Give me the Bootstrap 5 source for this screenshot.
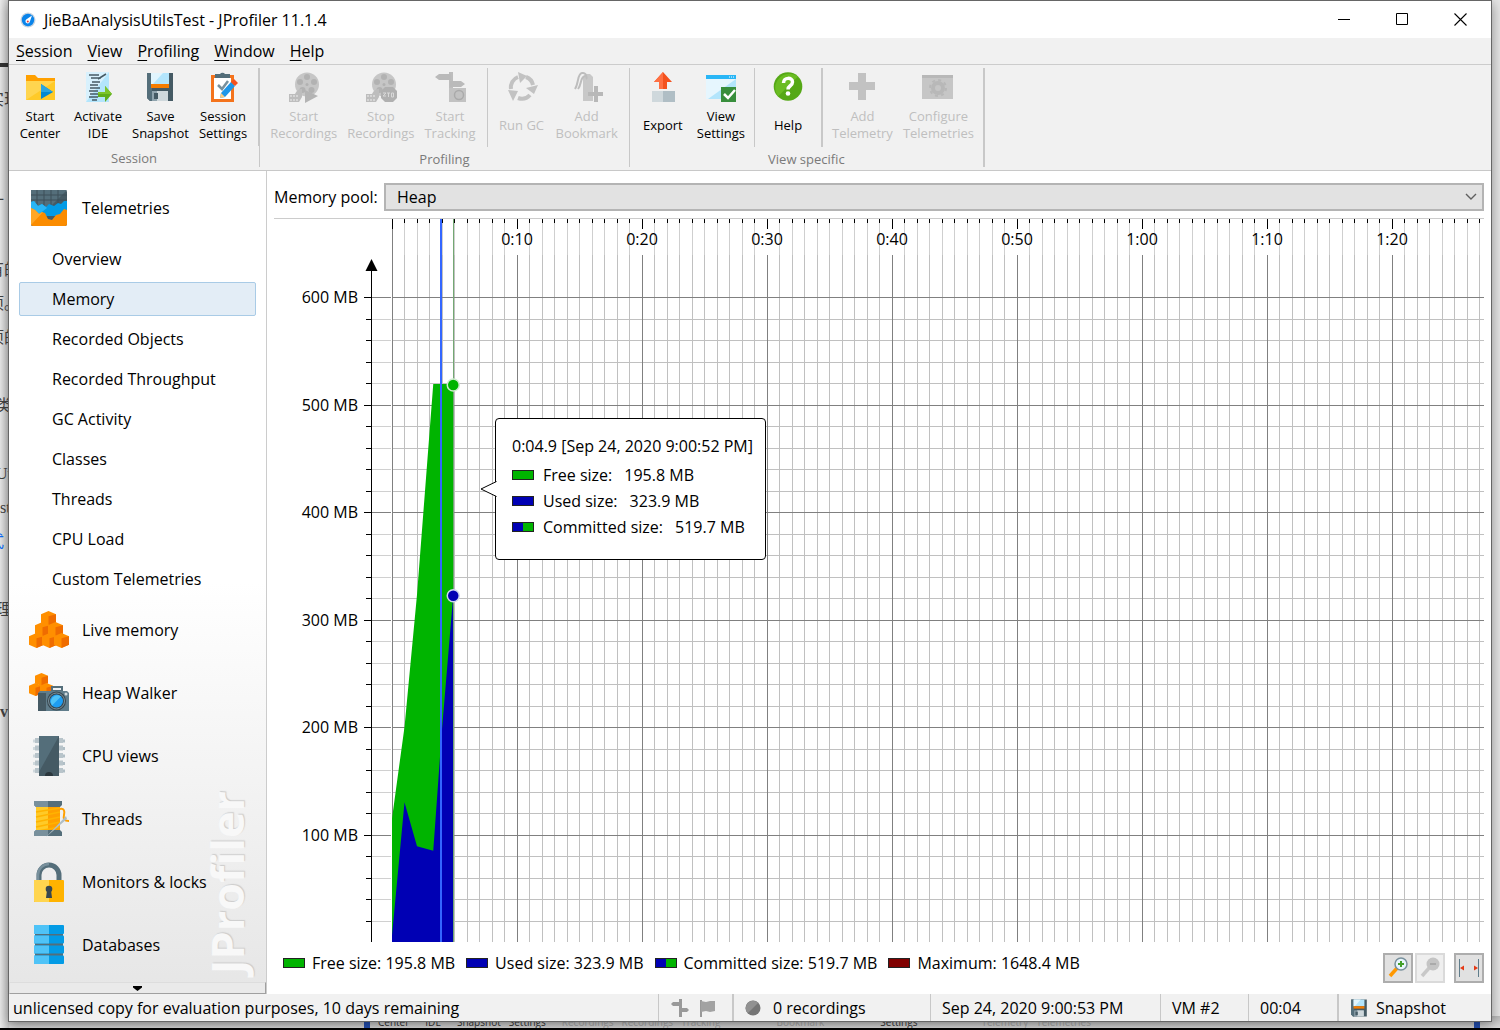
<!DOCTYPE html>
<html lang="en">
<head>
<meta charset="utf-8">
<meta name="viewport" content="width=device-width, initial-scale=1">
<title>JieBaAnalysisUtilsTest - JProfiler 11.1.4</title>
<link href="https://cdn.jsdelivr.net/npm/bootstrap@5.3.0/dist/css/bootstrap.min.css" rel="stylesheet">
<style>
body{font:16px/24px "Open Sans","Noto Sans","Noto Sans CJK SC",sans-serif;color:#000;background:#e6e6e6}
a{color:inherit;text-decoration:none}
svg{display:block;flex:none}
.desk{height:100vh;min-height:1000px;border-bottom:2px solid #000}
.doc-behind{left:0;top:0;padding-top:83px;width:40px;font:16px/34px "Liberation Serif","Noto Sans CJK SC",serif;color:#444;background:linear-gradient(90deg,#ececec,#ccc 9px)}
.doc-behind span{display:block;height:34px;margin-left:-12px;white-space:nowrap}
.doc-behind .near{margin-left:-4px}
.doc-rule{left:0;top:63px;width:9px;height:4px;background:#333}
.strip-behind{left:9px;right:0;bottom:0;height:12px;font-size:10px;line-height:12px;color:#333;background:linear-gradient(#bbb,#ddd);padding-left:355px;padding-right:20px}
.strip-behind i{width:6px;height:12px;background:#2450b4}
.strip-behind em{font-style:normal;color:#aaa}
.win{margin:0 8px 6px;border:1px solid #666;background:#fff;box-shadow:0 3px 12px rgba(0,0,0,.4);z-index:2}
.titlebar{height:37px;padding-left:11px;padding-right:2px}
.titlebar button{width:58px;height:36px}
.plain{background:none;border:0;padding:0;color:inherit}
.menus{height:27px;background:#f1f1f1;border-bottom:1px solid #ccc;padding-left:7px}
.menus a{margin-right:15px}
.menus u{text-underline-offset:3px}
.tools{height:106px;background:#f1f1f1;border-bottom:1px solid #c8c8c8;font-size:13px;line-height:17px}
.tool-group{margin:3px 0;border-right:1px solid #c8c8c8}
.tool-group:last-child{border-right-width:2px}
.tool-set{height:79px;padding:0 6px 0 5px;border-right:1px solid #c8c8c8}
.tool-group:last-child .tool-set{padding:0 4px}
.tool-set:last-child{border-right:0}
.tool-set.first-set{padding-left:2px}
.tool-set.wide-sep{border-right-width:2px}
.tool{min-width:58px;padding:3px 5px 0;height:76px}
.tool:disabled{color:#bfbfbf}
.tool-label{height:36px;margin-top:4px}
.group-name{color:#7a7a7a;margin-top:4px}
.side{width:258px;border-right:1px solid #ccc;background:linear-gradient(#fff 50%,#e6e6e6);}
.side-main{height:62px;padding-left:20px}
.side-main .pic{width:40px;margin-right:13px}
.side-sub{margin:3px 10px;height:34px;line-height:32px;padding-left:32px;border:1px solid transparent;border-radius:2px}
.side-sub.current{background:#e3edf6;border-color:#a9cbe6}
.side-top{padding-top:6px}
.side-rest{padding-bottom:6px}
.side-rest .side-main{flex:1 1 0;height:auto}
.side-more{height:12px;border:1px solid #a0a0a0;border-top-color:#ddd;border-left-color:#ddd;background:#eaeaea}
.watermark{right:12px;bottom:20px;font-weight:700;font-size:45px;line-height:54px;writing-mode:vertical-rl;transform:rotate(180deg);color:#f8f8f8;text-shadow:1px 1px 1px #ccc;z-index:0}
.side-main,.side-more{position:relative;z-index:1}
.view{padding:11px 7px 0}
.pool{height:30px}
.pool label{width:110px;flex:none;white-space:nowrap}
.pool select{height:28px;padding:0 11px;border:2px solid #b4b4b4;border-radius:0;background-color:#e2e2e2;color:#000;font-size:16px;line-height:24px;background-size:16px 14px;background-position:right 3px center;background-image:url("data:image/svg+xml,%3Csvg xmlns='http://www.w3.org/2000/svg' viewBox='0 0 16 14'%3E%3Cpath d='M3 4l5 5 5-5' fill='none' stroke='%23606060' stroke-width='1.4'/%3E%3C/svg%3E")}
.chart{margin-top:6px;border-top:1px solid #ccc;min-height:300px}
.chart svg.plot{width:100%;height:100%;position:absolute;inset:0}
.tip{left:221px;top:199px;width:271px;height:142px;padding:15px 16px;border:1px solid #000;border-radius:4px;background:#fff;white-space:nowrap}
.tip .row-line{height:26px}
.tip .row-line span+span{margin-left:12px}
.tip-arrow{left:-16px;top:62px}
.sw{display:inline-block;width:22px;height:10px;border:1px solid #222;margin-right:9px}
.sw-free{background:#00b400}
.sw-used{background:#0000b4}
.sw-both{background:linear-gradient(90deg,#0000b4 50%,#00b400 50%)}
.sw-max{background:#800000}
.legend-row{height:52px;padding-left:9px}
.legend-row .sw{margin-right:7px}
.entry{margin-right:11px;height:42px}
.zoomers{padding-top:11px}
.zoomers button{width:30px;height:30px;border:2px solid #adadad;background:#e1e1e1;padding:0}
.zoomers button:disabled{border-color:#dadada;background:#efefef;margin:0 9px 0 2px}
.status{height:27px;background:#f1f1f1;line-height:28px;padding-left:4px;white-space:nowrap}
.status>div+div{border-left:1px solid #c8c8c8;padding-left:11px}
.status>.thick{border-left-width:2px!important}
.c-marks{width:74px}.c-rec{width:198px}.c-date{width:230px}.c-vm{width:88px}.c-time{width:89px}.c-snap{width:154px}
</style>
<script src="https://cdn.jsdelivr.net/npm/bootstrap@5.3.0/dist/js/bootstrap.bundle.min.js"></script>
</head>
<body>
<svg width="0" height="0" class="position-absolute" aria-hidden="true">
  <symbol id="floppy" viewBox="0 0 30 30"><path d="M2 1h26v28H5l-3-3z" fill="#455a64"/><path d="M2 1h5v28H5l-3-3z" fill="#546e7a"/><path d="M6 1h18v11H6z" fill="#b3e5fc"/><path d="M6 1h12L8 12H6z" fill="#e1f5fe"/><path d="M6 12h18v4H6z" fill="#f57c00"/><path d="M7 19h16v10H7z" fill="#90a4ae"/><path d="M12 19h11v10H12z" fill="#cfd8dc"/><path d="M9 21h4v6H9z" fill="#455a64"/></symbol>
  <symbol id="reel" viewBox="0 0 30 30"><circle cx="18" cy="12.500" r="12" fill="#c6c6c6"/><g fill="#b2b2b2"><circle cx="18" cy="5" r="3"/><circle cx="25" cy="10" r="3"/><circle cx="22.500" cy="18" r="3"/><circle cx="13.500" cy="18" r="3"/><circle cx="11" cy="10" r="3"/><circle cx="18" cy="12.500" r="1.500"/></g><path d="M0 22h6c2-4 4-5 7-5v8l-3 5H0z" fill="#bdbdbd"/><path d="M1 24h2m1 0h2m1 0h2M1 28h2m1 0h2m1 0h2" stroke="#eee"/></symbol>
  <symbol id="cell" viewBox="0 0 14 14"><path d="M7 0l7 3v8l-7 3-7-3V3z" fill="#ff8f00"/><path d="M7 5l7-2v8l-7 3z" fill="#ef6c00"/></symbol>
</svg>

<div class="desk position-relative d-flex overflow-hidden">
  <div class="doc-behind position-absolute h-100" aria-hidden="true">
    <span>实现</span><span></span><span></span><span>计</span><span></span><span>有的</span><span>项。</span><span>项的</span><span></span><span class="near">类</span><span></span><span class="near">Uti</span><span class="near">&nbsp;st</span><span class="text-primary">式</span><span></span><span class="near">理</span><span></span><span></span><span><b>&nbsp;&nbsp;&nbsp;v</b></span>
  </div>
  <div class="doc-rule position-absolute"></div>
  <div class="strip-behind position-absolute d-flex" aria-hidden="true">
    <i></i><span class="ms-2">Center</span><span class="ms-3">IDE</span><span class="ms-3">Snapshot</span><span class="ms-2">Settings</span><em class="ms-3">Recordings</em><em class="ms-2">Recordings</em><em class="ms-2">Tracking</em><em class="ms-5 ps-2">Bookmark</em><span class="ms-5 ps-2">Settings</span><em class="ms-5 ps-3">Telemetry</em><em class="ms-2">Telemetries</em><i class="ms-auto"></i>
  </div>

  <div class="win position-relative flex-fill d-flex flex-column">
    <header class="titlebar d-flex align-items-center">
      <svg width="16" height="16" viewBox="0 0 16 16" class="me-2"><circle cx="8" cy="8" r="7.500" fill="#c8d4e0"/><circle cx="8" cy="8" r="6.200" fill="#0a84ea"/><path d="M12 3.500L9.800 9.800a2.200 2.200 0 1 1-3.600-2.200z" fill="#fff"/><circle cx="7.800" cy="9.500" r="1" fill="#e53935"/></svg>
      <span>JieBaAnalysisUtilsTest - JProfiler 11.1.4</span>
      <div class="ms-auto d-flex">
        <button class="plain d-flex align-items-center justify-content-center" aria-label="Minimize"><svg width="13" height="13"><path d="M0 6.500h12" stroke="#000"/></svg></button>
        <button class="plain d-flex align-items-center justify-content-center" aria-label="Maximize"><svg width="13" height="13"><path d="M.5.5h11v11H.5z" fill="none" stroke="#000"/></svg></button>
        <button class="plain d-flex align-items-center justify-content-center" aria-label="Close"><svg width="13" height="13"><path d="M.5.5l12 12m0-12l-12 12" stroke="#000" stroke-width="1.100"/></svg></button>
      </div>
    </header>

    <nav class="menus d-flex align-items-center">
      <a href="#"><u>S</u>ession</a><a href="#"><u>V</u>iew</a><a href="#"><u>P</u>rofiling</a><a href="#"><u>W</u>indow</a><a href="#"><u>H</u>elp</a>
    </nav>

    <div class="tools d-flex">
      <section class="tool-group d-flex flex-column">
        <div class="tool-set first-set d-flex">
          <button class="plain tool d-flex flex-column align-items-center"><svg width="32" height="32" viewBox="0 0 32 32"><path d="M2 4h9l3 3h17v9H2z" fill="#ffa000"/><path d="M2 10h29v19H2z" fill="#ffca28"/><path d="M2 10h29L2 29z" fill="#ffd54f"/><path d="M17 13l12 8-12 7z" fill="#0288d1"/><path d="M17 13l12 8H17z" fill="#29a4e0"/></svg><span class="tool-label d-flex align-items-center">Start<br>Center</span></button>
          <button class="plain tool d-flex flex-column align-items-center"><svg width="32" height="32" viewBox="0 0 32 32"><path d="M4 1h23v30H4z" fill="#b3e5fc"/><path d="M4 1h23L4 31z" fill="#d8f1fd"/><path d="M7 4h10M9 7h10m5-4l-8 5M10 11h8M8 14h8m-8 3h10M7 20h9m-8 3h8m-9 3h9m-6 3h5" stroke="#455a64" stroke-width="1.500"/><path d="M16 21h7v-6l7 8-7 8v-5h-7z" fill="#5fae1c"/><path d="M16 21h7v-6l7 8H16z" fill="#7cc52b"/></svg><span class="tool-label d-flex align-items-center">Activate<br>IDE</span></button>
          <button class="plain tool d-flex flex-column align-items-center"><svg width="32" height="32" viewBox="0 0 32 32"><use href="#floppy" x="1" y="1" width="30" height="30"/></svg><span class="tool-label d-flex align-items-center">Save<br>Snapshot</span></button>
          <button class="plain tool d-flex flex-column align-items-center"><svg width="32" height="32" viewBox="0 0 32 32"><path d="M4 4h23v27H4z" fill="#f4731c"/><path d="M7 7h17v21H7z" fill="#fff"/><path d="M8 3h5a3 3 0 0 1 5 0h5v4H8z" fill="#546e7a"/><path d="M11 14l4 4 6-8" fill="none" stroke="#78909c" stroke-width="2.500"/><path d="M13 27l1-5 10-11 4 4-10 11z" fill="#1e96e8"/><path d="M13 27l1-5 4 4z" fill="#ffcc80"/><path d="M24 11l3-3 4 4-3 3z" fill="#f4511e"/></svg><span class="tool-label d-flex align-items-center">Session<br>Settings</span></button>
        </div>
        <div class="group-name text-center">Session</div>
      </section>
      <section class="tool-group d-flex flex-column">
        <div class="d-flex">
          <div class="tool-set d-flex">
            <button disabled class="plain tool d-flex flex-column align-items-center"><svg width="32" height="32" viewBox="0 0 32 32"><use href="#reel" x="1" y="1" width="30" height="30"/><path d="M17 19l13 6-13 7z" fill="#b4b4b4"/></svg><span class="tool-label d-flex align-items-center">Start<br>Recordings</span></button>
            <button disabled class="plain tool d-flex flex-column align-items-center"><svg width="32" height="32" viewBox="0 0 32 32"><use href="#reel" x="1" y="1" width="30" height="30"/><path d="M20 16h8l4 4v7l-4 4h-8l-4-4v-7z" fill="#b0b0b0"/><path d="M18 22h3l-3 3h3m1-3h3m-1.500 0v4m3-4h2v4h-2z" stroke="#d8d8d8" fill="none"/></svg><span class="tool-label d-flex align-items-center">Stop<br>Recordings</span></button>
            <button disabled class="plain tool d-flex flex-column align-items-center"><svg width="32" height="32" viewBox="0 0 32 32"><path d="M15 1h4v30h-4z" fill="#bdbdbd"/><path d="M1 6l4-3h12v6H5zM16 10h11l4 3-4 3H16z" fill="#bababa"/><path d="M15 17h17v14H15z" fill="#c2c2c2"/><circle cx="25" cy="24" r="4.500" fill="none" stroke="#aaa" stroke-width="1.500"/></svg><span class="tool-label d-flex align-items-center">Start<br>Tracking</span></button>
          </div>
          <div class="tool-set d-flex">
            <button disabled class="plain tool d-flex flex-column align-items-center"><svg width="32" height="32" viewBox="0 0 32 32"><g fill="none" stroke="#c2c2c2" stroke-width="4"><path d="M5 18a11 11 0 0 1 7-12M20 6a11 11 0 0 1 7 8M24 24a11 11 0 0 1-12 3"/></g><path d="M12 1l9 4-7 7zM32 14l-4 9-8-6zM2 19l10 1-5 10z" fill="#c2c2c2"/></svg><span class="tool-label d-flex align-items-center">Run GC</span></button>
            <button disabled class="plain tool d-flex flex-column align-items-center"><svg width="32" height="32" viewBox="0 0 32 32"><path d="M12 6l3-3h4l3 3v24H12z" fill="#c8c8c8"/><path d="M4 18C8 12 6 3 11 2s4 5 5 6M7 18c4-5 2-12 7-13" fill="none" stroke="#bdbdbd" stroke-width="2"/><path d="M23 15h4v6h6v4h-6v6h-4v-6h-6v-4h6z" fill="#b8b8b8"/></svg><span class="tool-label d-flex align-items-center">Add<br>Bookmark</span></button>
          </div>
        </div>
        <div class="group-name text-center">Profiling</div>
      </section>
      <section class="tool-group d-flex flex-column">
        <div class="d-flex">
          <div class="tool-set d-flex">
            <button class="plain tool d-flex flex-column align-items-center"><svg width="32" height="32" viewBox="0 0 32 32"><path d="M5 20h11v11H5z" fill="#cfd8dc"/><path d="M16 20h12v11H16z" fill="#b0bec5"/><path d="M16 1l9 10h-5v7h-8v-7H7z" fill="#f4511e"/><path d="M16 1v17h-4v-7H7z" fill="#ff7043"/></svg><span class="tool-label d-flex align-items-center">Export</span></button>
            <button class="plain tool d-flex flex-column align-items-center"><svg width="32" height="32" viewBox="0 0 32 32"><path d="M1 4h30v24H1z" fill="#b3e5fc"/><path d="M1 8h30L3 28H1z" fill="#e6f6fe"/><path d="M1 4h30v4H1z" fill="#29b6f6"/><path d="M24 6h5" stroke="#fff" stroke-dasharray="1 1"/><path d="M16 16h15v15H16z" fill="#388e3c"/><path d="M19 23l4 4 7-8" fill="none" stroke="#fff" stroke-width="2.500"/></svg><span class="tool-label d-flex align-items-center">View<br>Settings</span></button>
          </div>
          <div class="tool-set wide-sep d-flex">
            <button class="plain tool d-flex flex-column align-items-center"><svg width="32" height="32" viewBox="0 0 32 32"><circle cx="16" cy="15.500" r="14.300" fill="#55a816"/><path d="M6 25.500A14.300 14.300 0 0 1 26 5.500z" fill="#6abc22"/><path d="M11.500 12c0-6 9-6 9-1 0 4-4.500 3.500-4.500 7.500" fill="none" stroke="#fff" stroke-width="3.500"/><circle cx="16" cy="22.500" r="2.300" fill="#fff"/></svg><span class="tool-label d-flex align-items-center">Help</span></button>
          </div>
          <div class="tool-set d-flex">
            <button disabled class="plain tool d-flex flex-column align-items-center"><svg width="32" height="32" viewBox="0 0 32 32"><path d="M12 2h8v9h9v8h-9v10h-8V19H3v-8h9z" fill="#c2c2c2"/></svg><span class="tool-label d-flex align-items-center">Add<br>Telemetry</span></button>
            <button disabled class="plain tool d-flex flex-column align-items-center"><svg width="32" height="32" viewBox="0 0 32 32"><path d="M0 4h31v24H0z" fill="#c6c6c6"/><path d="M0 4h31v3H0z" fill="#b8b8b8"/><circle cx="16" cy="17" r="5" fill="none" stroke="#b8b8b8" stroke-width="4"/><circle cx="16" cy="17" r="8" fill="none" stroke="#b8b8b8" stroke-width="2" stroke-dasharray="3 3.280"/></svg><span class="tool-label d-flex align-items-center">Configure<br>Telemetries</span></button>
          </div>
        </div>
        <div class="group-name text-center">View specific</div>
      </section>
    </div>

    <div class="d-flex flex-fill">
      <nav class="side flex-shrink-0 position-relative d-flex flex-column">
        <div class="watermark position-absolute" aria-hidden="true">JProfiler</div>
        <div class="side-top d-flex flex-column">
          <a href="#" class="side-main d-flex align-items-center"><span class="pic"><svg width="40" height="40" viewBox="0 0 40 40"><rect x="2" y="2" width="36" height="36" rx="2" fill="#455a64"/><path d="M2 2h36L2 38z" fill="#546e7a"/><path d="M8 2v18M15 2v18M22 2v18M29 2v18M2 7h36M2 12h36" stroke="#3c4f58"/><path d="M2 14l3-1 4 5 4-2 4 3 3-3 5 2 4-3 3 1 3-3h3v15H2z" fill="#039be5"/><path d="M2 14l3-1 4 5 4-2 4 3 1 1L6 29H2z" fill="#29b6f6"/><path d="M2 20l4 2 4 4 3-2 3 1 3 6 4 1 4-5 4-1 4-5 3 1v14a2 2 0 0 1-2 2H4a2 2 0 0 1-2-2z" fill="#fb8c00"/><path d="M2 20l4 2 4 4 3-2 1 0L2 37z" fill="#ffa726"/></svg></span>Telemetries</a>
          <a href="#" class="side-sub">Overview</a>
          <a href="#" class="side-sub current">Memory</a>
          <a href="#" class="side-sub">Recorded Objects</a>
          <a href="#" class="side-sub">Recorded Throughput</a>
          <a href="#" class="side-sub">GC Activity</a>
          <a href="#" class="side-sub">Classes</a>
          <a href="#" class="side-sub">Threads</a>
          <a href="#" class="side-sub">CPU Load</a>
          <a href="#" class="side-sub">Custom Telemetries</a>
        </div>
        <div class="side-rest flex-fill d-flex flex-column">
          <a href="#" class="side-main d-flex align-items-center"><span class="pic"><svg width="40" height="40" viewBox="0 0 40 40"><use href="#cell" x="12" y="1" width="15" height="15"/><use href="#cell" x="6" y="12" width="15" height="15"/><use href="#cell" x="19" y="12" width="15" height="15"/><use href="#cell" x="0" y="23" width="15" height="15"/><use href="#cell" x="13" y="23" width="15" height="15"/><use href="#cell" x="25" y="23" width="15" height="15"/></svg></span>Live memory</a>
          <a href="#" class="side-main d-flex align-items-center"><span class="pic"><svg width="40" height="40" viewBox="0 0 40 40"><use href="#cell" x="6" y="0" width="13" height="13"/><use href="#cell" x="0" y="10" width="13" height="13"/><use href="#cell" x="11" y="10" width="13" height="13"/><path d="M22 13h12v5H22z" fill="#546e7a"/><path d="M24 15h8v2h-8z" fill="#eceff1"/><path d="M9 20l2-2h27l2 2v18H9z" fill="#607d8b"/><path d="M9 20h8v18H9z" fill="#455a64"/><circle cx="27.500" cy="28" r="9.500" fill="#37474f"/><circle cx="27.500" cy="28" r="8" fill="none" stroke="#78909c"/><circle cx="27.500" cy="28" r="6.500" fill="#1e9df2"/><path d="M23 32.500A6.500 6.500 0 0 1 32 23.500z" fill="#4fc3f7"/><circle cx="37" cy="21" r="1.500" fill="#cfd8dc"/></svg></span>Heap Walker</a>
          <a href="#" class="side-main d-flex align-items-center"><span class="pic"><svg width="40" height="40" viewBox="0 0 40 40"><path d="M4 5h6m-6 7.500h6M4 20h6m-6 7.500h6M4 35h6" stroke="#cfd8dc" stroke-width="3"/><path d="M30 5h6m-6 7.500h6M30 20h6m-6 7.500h6M30 35h6" stroke="#b0bec5" stroke-width="3"/><path d="M8 2v36M32 2v36" stroke="#b8c4ca" stroke-width="4" stroke-dasharray="5 2.500"/><path d="M10 0h20v40H10z" fill="#455a64"/><path d="M10 0h20L10 36z" fill="#546e7a"/><path d="M16 40a4 4 0 0 1 8 0z" fill="#2b373d"/></svg></span>CPU views</a>
          <a href="#" class="side-main d-flex align-items-center"><span class="pic"><svg width="40" height="40" viewBox="0 0 40 40"><path d="M7 7h24v25H7z" fill="#ffa000"/><path d="M7 7h12v25H7z" fill="#ffca28"/><path d="M7 13l24-4M7 18l24-5M7 23l24-5M7 28l24-5M9 32l22-4" stroke="#ffb300" stroke-width="1.500"/><path d="M5 2h28v4l-2 2H7L5 6zM5 37v-4l2-2h24l2 2v4z" fill="#546e7a"/><path d="M5 2h14v6H7L5 6zM5 37v-4l2-2h12v6z" fill="#78909c"/><path d="M31 10c4-1 5 2 4 6s0 6 5 6" fill="none" stroke="#ffa000" stroke-width="2"/><path d="M37 17l1 3-21 18z" fill="#b0bec5"/></svg></span>Threads</a>
          <a href="#" class="side-main d-flex align-items-center"><span class="pic"><svg width="40" height="40" viewBox="0 0 40 40"><path d="M10 20v-7a10 10 0 0 1 20 0v7" fill="none" stroke="#546e7a" stroke-width="5"/><path d="M9 20v-7a11 11 0 0 1 11-11" fill="none" stroke="#78909c" stroke-width="2.500"/><rect x="5" y="18" width="30" height="22" rx="1" fill="#ffb300"/><path d="M5 18h15v22H6l-1-1z" fill="#ffd54f"/><circle cx="20" cy="27" r="3.300" fill="#37474f"/><path d="M18 28h4l1 8h-6z" fill="#37474f"/></svg></span>Monitors &amp; locks</a>
          <a href="#" class="side-main d-flex align-items-center"><span class="pic"><svg width="40" height="40" viewBox="0 0 40 40"><path d="M6 9h28v24H6z" fill="#546e7a"/><g fill="#039be5"><rect x="5" y="0" width="30" height="9" rx="1"/><rect x="5" y="10.500" width="30" height="8" rx="1"/><rect x="5" y="20.500" width="30" height="8" rx="1"/><rect x="5" y="30.500" width="30" height="8.500" rx="1"/></g><g fill="#4fc3f7"><path d="M5 0h15v9H5zM5 10.500h15v8H5zM5 20.500h15v8H5zM5 30.500h15V39H5z"/></g></svg></span>Databases</a>
        </div>
        <button class="side-more p-0 d-flex align-items-center justify-content-center" aria-label="Scroll down"><svg width="9" height="5"><path d="M0 0h9v1.500L4.500 5 0 1.500z"/></svg></button>
      </nav>

      <main class="view flex-fill d-flex flex-column">
        <div class="pool d-flex align-items-center">
          <label for="pool">Memory pool:</label>
          <select id="pool" class="form-select"><option>Heap</option></select>
        </div>
        <div class="chart flex-fill position-relative" id="chart">
          <svg class="plot" role="img" aria-label="Heap memory over time"></svg>
          <div class="tip position-absolute">
            <svg class="tip-arrow position-absolute" width="17" height="16"><path d="M16.500 .5L1 8l15.500 7.500" fill="#fff" stroke="#000"/></svg>
            <div class="mb-1">0:04.9 [Sep 24, 2020 9:00:52 PM]</div>
            <div class="row-line d-flex align-items-center"><span class="sw sw-free"></span>Free size: <span>195.8 MB</span></div>
            <div class="row-line d-flex align-items-center"><span class="sw sw-used"></span>Used size: <span>323.9 MB</span></div>
            <div class="row-line d-flex align-items-center"><span class="sw sw-both"></span>Committed size: <span>519.7 MB</span></div>
          </div>
        </div>
        <div class="legend-row d-flex">
          <span class="entry d-flex align-items-center"><span class="sw sw-free"></span>Free size: 195.8 MB</span>
          <span class="entry d-flex align-items-center"><span class="sw sw-used"></span>Used size: 323.9 MB</span>
          <span class="entry d-flex align-items-center"><span class="sw sw-both"></span>Committed size: 519.7 MB</span>
          <span class="entry d-flex align-items-center"><span class="sw sw-max"></span>Maximum: 1648.4 MB</span>
          <div class="zoomers ms-auto d-flex">
            <button aria-label="Zoom in"><svg width="26" height="26" viewBox="0 0 26 26"><path d="M5 21l8-9" stroke="#ff9800" stroke-width="3.500"/><circle cx="16" cy="9" r="6" fill="#e8f6fd" stroke="#78909c" stroke-width="1.500"/><path d="M13 9h6m-3-3v6" stroke="#43a02b" stroke-width="2"/></svg></button>
            <button disabled aria-label="Zoom out"><svg width="26" height="26" viewBox="0 0 26 26"><path d="M5 21l8-9" stroke="#c8c8c8" stroke-width="3.500"/><circle cx="16" cy="9" r="6.500" fill="#c4c4c4"/><path d="M13 9h6" stroke="#aaa" stroke-width="2"/></svg></button>
            <button aria-label="Fit to window"><svg width="26" height="26" viewBox="0 0 26 26"><path d="M3.500 4v18M22.500 4v18" stroke="#607d8b"/><path d="M4 13l4-2.500v5zM22 13l-4-2.500v5z" fill="#e53915"/></svg></button>
          </div>
        </div>
      </main>
    </div>

    <footer class="status d-flex">
      <div class="flex-fill">unlicensed copy for evaluation purposes, 10 days remaining</div>
      <div class="c-marks d-flex align-items-center"><svg width="20" height="18" class="me-2"><path d="M9 0h3v18H9z" fill="#999"/><path d="M1 5l2-2h9v4H3zM9 9h8l2 2-2 2H9z" fill="#999"/></svg><svg width="18" height="18"><path d="M2 1h2v17H2z" fill="#999"/><path d="M3 2l5 1 4-1h5v10l-5 1-4-1-5 1z" fill="#a2a2a2"/></svg></div>
      <div class="c-rec thick d-flex align-items-center"><svg width="16" height="16" class="me-2"><circle cx="8" cy="8" r="7.500" fill="#757575"/><path d="M2.700 13.300A7.500 7.500 0 0 1 13.300 2.700z" fill="#919191"/></svg><span class="ms-1">0 recordings</span></div>
      <div class="c-date">Sep 24, 2020 9:00:53 PM</div>
      <div class="c-vm">VM #2</div>
      <div class="c-time">00:04</div>
      <div class="c-snap thick d-flex align-items-center"><svg width="18" height="18" class="me-2"><use href="#floppy" width="18" height="18"/></svg><span>Snapshot</span></div>
    </footer>
  </div>
</div>

<script>
const chart = document.getElementById('chart');
const plot = chart.querySelector('.plot');
const LEFT = 118, AXIS = 97, PER_SECOND = 12.5, PER_MB = 1.075;
// [seconds, MB] samples
const committed = [[0, 115], [1, 200], [2, 323], [3.3, 519], [4.9, 519]];
const used = [[0, 6], [1, 130], [2, 89], [3.3, 85], [4, 198], [4.9, 323]];

function draw() {
  const w = chart.clientWidth, h = chart.clientHeight, base = h;
  const x = s => LEFT + s * PER_SECOND, y = mb => base - mb * PER_MB;
  const rect = (l, t, rw, rh, c) => `<rect x="${Math.floor(l)}" y="${Math.round(t)}" width="${rw}" height="${rh}" fill="${c}"/>`;
  const area = (pts, c) => `<polygon fill="${c}" points="${x(0)},${base} ${pts.map(p => x(p[0]) + ',' + y(p[1])).join(' ')} ${x(4.9)},${base}"/>`;
  let out = '', marks = '', majors = '';
  const total = Math.floor((w - LEFT) / PER_SECOND);
  for (let s = 0; s <= total; s++) {
    const major = s % 10 === 0;
    if (!major) out += rect(x(s), 36, 1, h, '#c0c0c0') + rect(x(s), 4, 1, 32, '#cfcfcf');
    else majors += rect(x(s), s ? 36 : 0, 1, h, '#808080');
    marks += rect(x(s), 0, 1, major ? 10 : 4, '#000');
    if (major && s) {
      const label = Math.floor(s / 60) + ':' + String(s % 60).padStart(2, '0');
      marks += `<text x="${x(s)}" y="26" text-anchor="middle">${label}</text>`;
    }
  }
  for (let mb = 20; mb <= 600; mb += 20) {
    const major = mb % 100 === 0, ty = y(mb);
    const line = rect(LEFT, ty, w - LEFT, 1, major ? '#808080' : '#c0c0c0');
    if (major) majors += line; else out += line;
    out += rect(AXIS, ty, 20, 1, major ? '#808080' : '#d0d0d0');
    marks += rect(AXIS - (major ? 7 : 5), ty, major ? 7 : 5, 1, '#000');
    if (major) marks += `<text x="84" y="${Math.round(ty) + 6}" text-anchor="end">${mb} MB</text>`;
  }
  out += majors + area(committed, '#00b400') + area(used, '#0000b4');
  out += rect(x(4.9), 0, 1, h, '#73a873') + marks + rect(x(3.9), 0, 2, h, '#3366ff');
  out += rect(AXIS, 45, 1, h, '#000') + `<path d="M${AXIS + .5} 40l6 12h-12z"/>`;
  out += `<circle cx="${x(4.9)}" cy="${y(519) + 1}" r="6" fill="#00b400" stroke="#cfeccf" stroke-width="1.5"/>`;
  out += `<circle cx="${x(4.9)}" cy="${y(323) + 1}" r="6" fill="#0000b4" stroke="#cfd8f0" stroke-width="1.5"/>`;
  plot.innerHTML = out;
}
draw();
new ResizeObserver(draw).observe(chart);
</script>
</body>
</html>
